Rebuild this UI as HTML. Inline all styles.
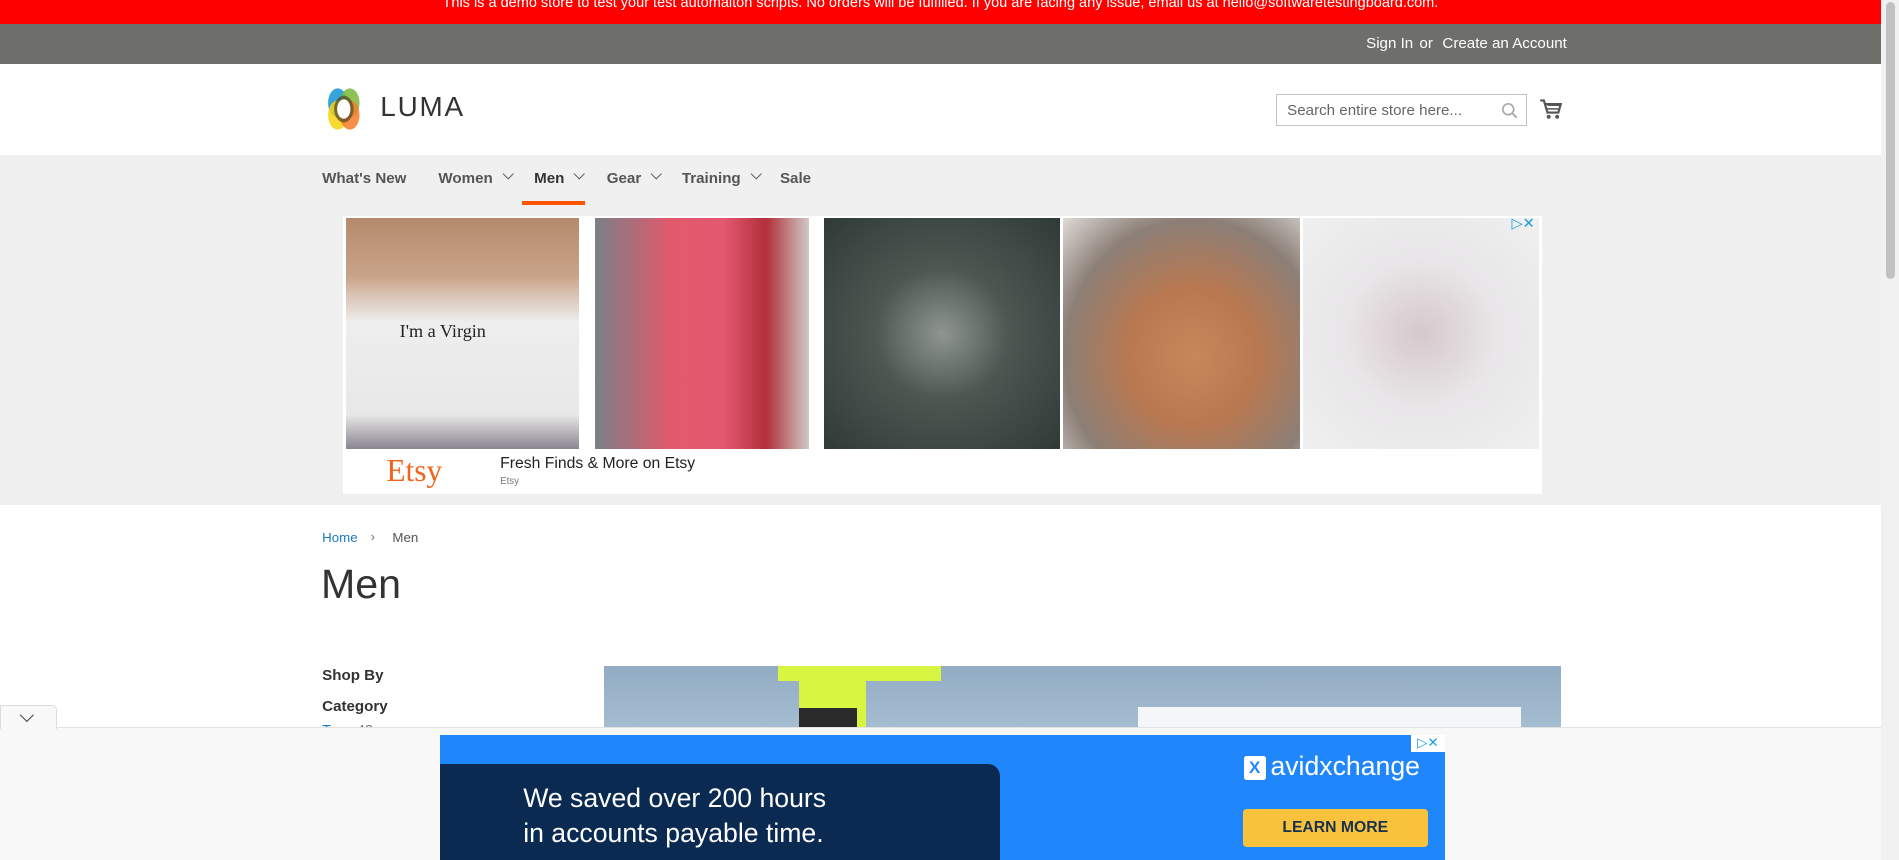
<!DOCTYPE html>
<html><head><meta charset="utf-8">
<style>
html{zoom:1.2111}
*{margin:0;padding:0;box-sizing:border-box}
body{width:1568px;height:710px;overflow:hidden;position:relative;background:#fff;font-family:"Liberation Sans",sans-serif;color:#333}
.a{position:absolute}
.red{left:0;top:0;width:1553px;height:20px;background:#f00;color:#fff;font-size:12px;text-align:center;line-height:6px}
.gray{left:0;top:20px;width:1553px;height:33px;background:#6e6f6b;color:#fff;font-size:12.5px}
.nav{left:0;top:128px;width:1553px;height:289px;background:#f0f0f0}
.ni{top:140px;font-size:12.5px;font-weight:bold;color:#555}
.chev{display:inline-block;width:7px;height:7px;border-right:1.3px solid #555;border-bottom:1.3px solid #555;transform:rotate(45deg);margin-left:9px;position:relative;top:-3px}
</style></head><body>
<div class="a red">This is a demo store to test your test automaiton scripts. No orders will be fulfilled. If you are facing any issue, email us at hello@softwaretestingboard.com.</div>
<div class="a gray"><span class="a" style="left:1128px;top:9px">Sign In</span><span class="a" style="left:1172px;top:9px">or</span><span class="a" style="left:1191px;top:9px">Create an Account</span></div>
<!-- logo -->
<svg class="a" style="left:266px;top:71px" width="36" height="38" viewBox="0 0 36 38">
<ellipse cx="13" cy="14" rx="8" ry="12" fill="#1e9ad6" opacity=".9"/>
<ellipse cx="23" cy="14" rx="8" ry="12" fill="#7ab936" opacity=".85"/>
<ellipse cx="13" cy="24" rx="8" ry="12" fill="#f8d20f" opacity=".85"/>
<ellipse cx="23" cy="24" rx="8" ry="12" fill="#f37b2a" opacity=".85"/>
<ellipse cx="18" cy="19" rx="8" ry="11" fill="#5a4a2a" opacity=".75"/>
<ellipse cx="18" cy="19" rx="5.5" ry="8" fill="#fff"/></svg>
<div class="a" style="left:314px;top:75px;font-size:23px;letter-spacing:1.5px;color:#333">LUMA</div>
<div class="a" style="left:1054px;top:78px;width:207px;height:26px;border:1px solid #c2c2c2;font-size:12.5px;color:#666;padding:5px 8px">Search entire store here...</div>
<svg class="a" style="left:1239px;top:84px" width="14" height="14" viewBox="0 0 14 14"><circle cx="6" cy="6" r="4.5" fill="none" stroke="#aaa" stroke-width="1.4"/><path d="M9 9l4 4" stroke="#aaa" stroke-width="1.6"/></svg>
<svg class="a" style="left:1271px;top:81px" width="19" height="18" viewBox="0 0 19 18"><path d="M1 2h3l3 10h9l2-7H5" fill="none" stroke="#555" stroke-width="1.8"/><path d="M7 6h10M7 9h9" stroke="#555" stroke-width="1.2"/><circle cx="8" cy="15.5" r="1.6" fill="#555"/><circle cx="15" cy="15.5" r="1.6" fill="#555"/></svg>
<div class="a nav"></div>
<div class="a ni" style="left:266px">What's New</div>
<div class="a ni" style="left:362px">Women<span class="chev"></span></div>
<div class="a ni" style="left:441px;color:#333">Men<span class="chev"></span></div>
<div class="a ni" style="left:501px">Gear<span class="chev"></span></div>
<div class="a ni" style="left:563px">Training<span class="chev"></span></div>
<div class="a ni" style="left:644px">Sale</div>
<div class="a" style="left:431px;top:166px;width:52px;height:3px;background:#ff5501"></div>
<!-- ad -->
<div class="a" style="left:283px;top:178px;width:990px;height:230px;background:#fff"></div>
<div class="a" style="left:286px;top:180px;width:192px;height:191px;background:linear-gradient(180deg,#b58a6c 0,#c9a388 25%,#eeeeee 45%,#e8e8e8 85%,#8a8590 100%)"></div>
<div class="a" style="left:330px;top:265px;font-family:'Liberation Serif',serif;font-size:15px;color:#222">I'm a Virgin</div>
<div class="a" style="left:491px;top:180px;width:177px;height:191px;background:linear-gradient(90deg,#7a8088 0,#e05a6c 35%,#e55870 60%,#b0303a 80%,#cfc9c5 100%)"></div>
<div class="a" style="left:680px;top:180px;width:195px;height:191px;background:radial-gradient(ellipse at 50% 50%,#8f9690 0,#4d5752 40%,#2f3a36 100%)"></div>
<div class="a" style="left:878px;top:180px;width:195px;height:191px;background:radial-gradient(ellipse at 55% 60%,#c8875a 0,#b97850 35%,#8c7f77 70%,#dedbd8 100%)"></div>
<div class="a" style="left:1076px;top:180px;width:195px;height:191px;background:radial-gradient(ellipse at 50% 50%,#d6c8cc 0,#e8e6e8 45%,#f0f0f0 100%)"></div>
<div class="a" style="left:1248px;top:178px;font-size:12px;color:#1aa0d8">▷✕</div>
<div class="a" style="left:319px;top:374px;font-family:'Liberation Serif',serif;font-size:26px;color:#f1641e">Etsy</div>
<div class="a" style="left:413px;top:376px;font-size:13px;color:#222">Fresh Finds &amp; More on Etsy</div>
<div class="a" style="left:413px;top:393px;font-size:8px;color:#777">Etsy</div>
<!-- content -->
<div class="a" style="left:266px;top:438px;font-size:11px;color:#1979c3">Home</div>
<div class="a" style="left:306px;top:437px;font-size:11px;color:#777">›</div>
<div class="a" style="left:324px;top:438px;font-size:11px;color:#555">Men</div>
<div class="a" style="left:265px;top:463px;font-size:34px;font-weight:300;color:#333">Men</div>
<div class="a" style="left:266px;top:551px;font-size:12.5px;font-weight:bold">Shop By</div>
<div class="a" style="left:266px;top:576px;font-size:12.5px;font-weight:bold">Category</div>
<div class="a" style="left:266px;top:597px;font-size:12px;color:#1979c3">Tops <span style="color:#777">48</span></div>
<div class="a" style="left:499px;top:550px;width:790px;height:60px;background:linear-gradient(180deg,#92acc4,#a9c0d3)"></div>
<div class="a" style="left:642px;top:550px;width:135px;height:12px;background:#d8f542"></div>
<div class="a" style="left:660px;top:560px;width:55px;height:50px;background:#d8f542"></div>
<div class="a" style="left:660px;top:585px;width:48px;height:25px;background:#2a2a2a"></div>
<div class="a" style="left:940px;top:584px;width:316px;height:30px;background:#f5f6f7"></div>
<!-- bottom overlay -->
<div class="a" style="left:0;top:600px;width:1553px;height:110px;background:#f8f8f8;border-top:1px solid #e2e2e2"></div>
<div class="a" style="left:0;top:582px;width:47px;height:20px;background:#f8f8f8;border:1px solid #ddd;border-bottom:none;border-radius:0 4px 0 0"></div>
<div class="a" style="left:18px;top:586px;width:8px;height:8px;border-right:1.5px solid #444;border-bottom:1.5px solid #444;transform:rotate(45deg)"></div>
<div class="a" style="left:363px;top:607px;width:830px;height:103px;background:#1f86fb"></div>
<div class="a" style="left:363px;top:631px;width:463px;height:79px;background:#0b2a52;border-radius:0 10px 0 0"></div>
<div class="a" style="left:432px;top:645px;font-size:22px;color:#fff;line-height:29px">We saved over 200 hours<br>in accounts payable time.</div>
<div class="a" style="left:1027px;top:624px;width:18px;height:20px;background:#fff;border-radius:2px;color:#1f86fb;font-weight:bold;font-size:14px;text-align:center;line-height:20px">X</div>
<div class="a" style="left:1049px;top:620px;font-size:22px;color:#fff">avidxchange</div>
<div class="a" style="left:1026px;top:668px;width:153px;height:31px;background:#f9c23c;border-radius:3px;color:#17314f;font-weight:bold;font-size:13px;text-align:center;line-height:31px">LEARN MORE</div>
<div class="a" style="left:1165px;top:607px;width:28px;height:14px;background:#fff;font-size:11px;color:#1aa0d8;text-align:center;line-height:14px">▷✕</div>
<!-- scrollbar -->
<div class="a" style="left:1553px;top:0;width:15px;height:710px;background:#f1f1f1"></div>
<div class="a" style="left:1557px;top:2px;width:8px;height:228px;background:#c1c1c1;border-radius:4px"></div>
</body></html>
